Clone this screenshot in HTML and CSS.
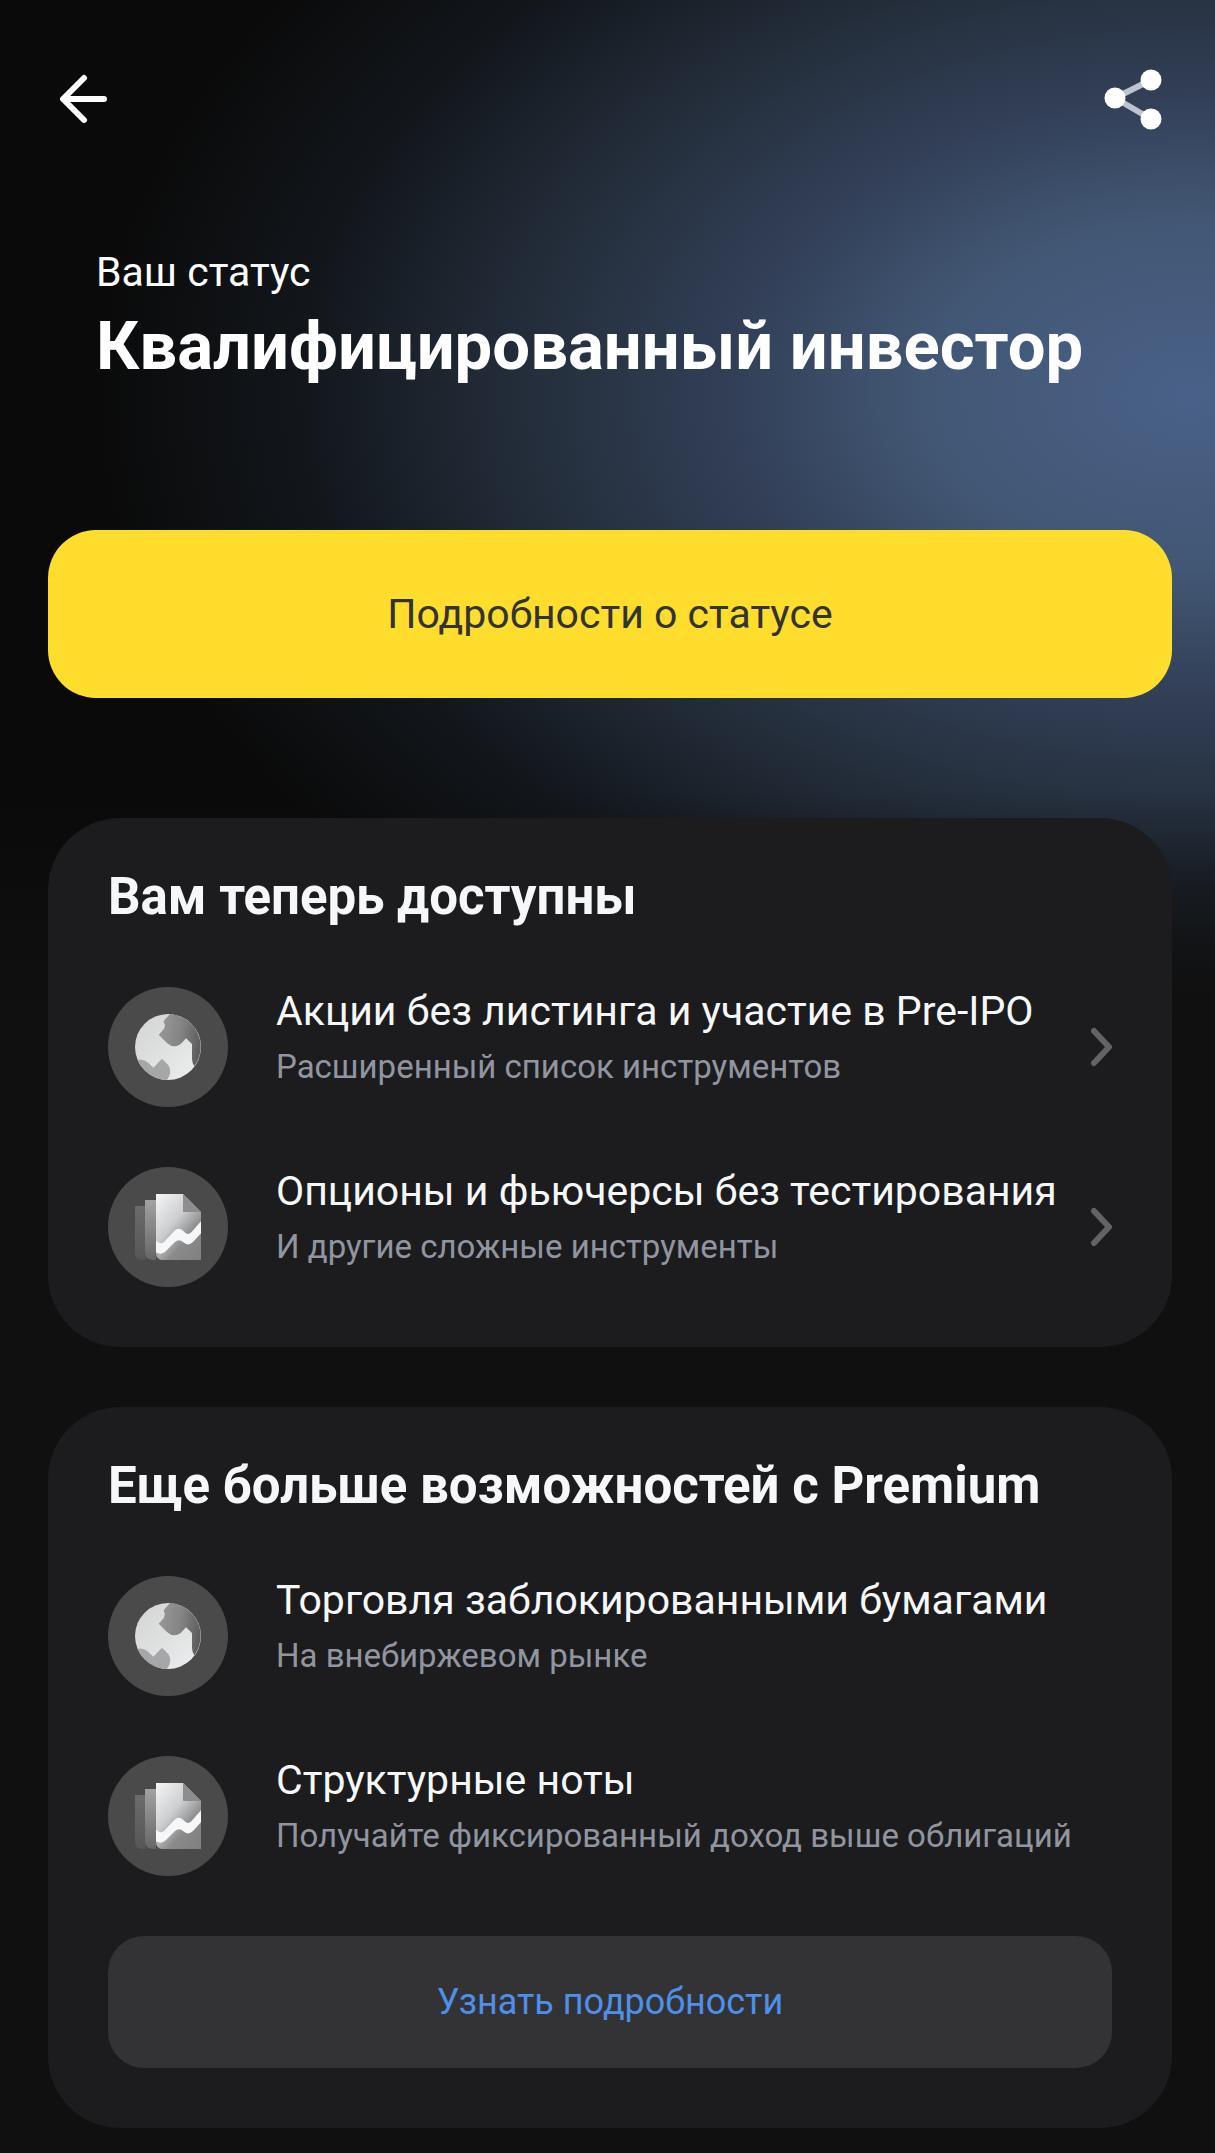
FILE: index.html
```html
<!DOCTYPE html>
<html lang="ru">
<head>
  <meta charset="UTF-8">
  <meta name="viewport" content="width=device-width, initial-scale=1">
  <title>Статус инвестора</title>
  <link rel="stylesheet" href="styles.css">
</head>
<body>

<!-- Shared icons -->
<svg class="sprite" aria-hidden="true">
  <defs>
    <linearGradient id="globeLight" x1="0" y1="0" x2="1" y2="1">
      <stop offset="0" stop-color="#d2d4d5"/>
      <stop offset="0.5" stop-color="#dfe1e1"/>
      <stop offset="1" stop-color="#eeeff0"/>
    </linearGradient>
    <linearGradient id="globeDark" x1="0" y1="0.3" x2="1" y2="0.5">
      <stop offset="0" stop-color="#989898"/>
      <stop offset="0.5" stop-color="#858585"/>
      <stop offset="1" stop-color="#5c5c5d"/>
    </linearGradient>
    <linearGradient id="sheetBack" x1="0" y1="0" x2="0" y2="1">
      <stop offset="0" stop-color="#6b6b6c"/>
      <stop offset="1" stop-color="#565657"/>
    </linearGradient>
    <linearGradient id="sheetMid" x1="0" y1="0" x2="0" y2="1">
      <stop offset="0" stop-color="#a2a2a3"/>
      <stop offset="1" stop-color="#666667"/>
    </linearGradient>
    <linearGradient id="sheetFront" x1="0" y1="0" x2="0.8" y2="1">
      <stop offset="0" stop-color="#f6f6f7"/>
      <stop offset="0.45" stop-color="#cdcecf"/>
      <stop offset="0.75" stop-color="#8a8a8b"/>
      <stop offset="1" stop-color="#828283"/>
    </linearGradient>
  </defs>
  <symbol id="globe" viewBox="0 0 360 360">
    <circle cx="180" cy="180" r="99" fill="url(#globeLight)"/>
    <path d="M186 81L169 100Q165 106 170 111Q172 118 167 127L152 143L176 167Q197 187 218 171L234 154L252 171V215Q252 226 259 238A99 99 0 0 0 186 81Z" fill="url(#globeDark)"/>
    <path d="M89 218Q106 215 119 226L136 242L162 215L180 233Q195 252 177 279A99 99 0 0 1 89 218Z" fill="#a6a7a8"/>
  </symbol>
  <symbol id="sheets" viewBox="0 0 360 360">
    <path d="M81 117H112V279H103Q81 279 81 257Z" fill="url(#sheetBack)"/>
    <path d="M111 99H144V279H135Q111 279 111 255Z" fill="url(#sheetMid)"/>
    <path d="M144 81H225L279 135V279H166Q144 279 144 257Z" fill="url(#sheetFront)"/>
    <path d="M225 81L279 135H225Z" fill="#8d8d8e"/>
    <path d="M144 221Q158 234 168 225L199 192Q212 179 226 192L230 196Q240 206 250 196L279 163V199L255 225Q240 239 226 226Q213 213 200 226L174 252Q160 266 144 256Z" fill="#f6f7f8"/>
  </symbol>
  <symbol id="chevron" viewBox="0 0 24 40">
    <path d="M6 4L21 20L6 36" fill="none" stroke="#636364" stroke-width="6" stroke-linecap="round" stroke-linejoin="round"/>
  </symbol>
</svg>

<main class="page">
  <header class="topbar">
    <button class="icon-btn" aria-label="Назад">
      <svg width="60" height="60" viewBox="0 0 60 60">
        <path d="M36 9L15 30L36 51M16 30H56" fill="none" stroke="#fff" stroke-width="6" stroke-linecap="round" stroke-linejoin="round"/>
      </svg>
    </button>
    <button class="icon-btn" aria-label="Поделиться">
      <svg width="60" height="60" viewBox="0 0 60 60">
        <path d="M47 11L11 29L47 50" fill="none" stroke="#bcc4cf" stroke-width="6"/>
        <circle cx="11" cy="29" r="10.5" fill="#fff"/>
        <circle cx="47" cy="11" r="10.5" fill="#fff"/>
        <circle cx="47" cy="50" r="10.5" fill="#fff"/>
      </svg>
    </button>
  </header>

  <section class="status">
    <p class="status-label">Ваш статус</p>
    <h1>Квалифицированный инвестор</h1>
  </section>

  <button class="btn-primary">Подробности о статусе</button>

  <section class="card">
    <h2>Вам теперь доступны</h2>
    <ul class="list">
      <li>
        <a class="item" href="#">
          <svg class="item-icon"><use href="#globe"/></svg>
          <span class="item-text">
            <span class="item-title">Акции без листинга и участие в Pre-IPO</span>
            <span class="item-sub">Расширенный список инструментов</span>
          </span>
          <svg class="item-arrow"><use href="#chevron"/></svg>
        </a>
      </li>
      <li>
        <a class="item" href="#">
          <svg class="item-icon"><use href="#sheets"/></svg>
          <span class="item-text">
            <span class="item-title">Опционы и фьючерсы без тестирования</span>
            <span class="item-sub">И другие сложные инструменты</span>
          </span>
          <svg class="item-arrow"><use href="#chevron"/></svg>
        </a>
      </li>
    </ul>
  </section>

  <section class="card">
    <h2>Еще больше возможностей с Premium</h2>
    <ul class="list">
      <li class="item">
        <svg class="item-icon"><use href="#globe"/></svg>
        <span class="item-text">
          <span class="item-title">Торговля заблокированными бумагами</span>
          <span class="item-sub">На внебиржевом рынке</span>
        </span>
      </li>
      <li class="item">
        <svg class="item-icon"><use href="#sheets"/></svg>
        <span class="item-text">
          <span class="item-title">Структурные ноты</span>
          <span class="item-sub">Получайте фиксированный доход выше облигаций</span>
        </span>
      </li>
    </ul>
    <button class="btn-secondary">Узнать подробности</button>
  </section>
</main>

</body>
</html>
```
FILE: styles.css
```css
* {
  box-sizing: border-box;
}

body {
  margin: 0;
  background-color: #101010;
  color: #f6f7f8;
  font-family: Roboto, "Noto Sans", sans-serif;
}

h1, h2, p, ul {
  margin: 0;
  padding: 0;
}

button {
  border: none;
  font-family: inherit;
  cursor: pointer;
}

.sprite {
  position: absolute;
  width: 0;
  height: 0;
}

.page {
  padding: 69px 43px 25px 48px;
  background:
    linear-gradient(to bottom, rgba(16, 16, 16, 0) 790px, #101010 1020px),
    radial-gradient(1120px 730px at 98% 395px, #496188 0%, #425774 24%, #323f57 41%, #232d3a 60%, #12161b 80%, #0a0a0a 98%);
}

.topbar {
  display: flex;
  justify-content: space-between;
  padding-right: 8px;
}

.icon-btn {
  display: flex;
  padding: 0;
  background: none;
}

.icon-btn svg {
  overflow: visible;
}

.status {
  padding: 115px 48px 0;
  color: #fff;
}

.status-label {
  font-size: 41px;
  line-height: 56px;
}

h1 {
  font-size: 67px;
  font-weight: 700;
  line-height: 92px;
}

.btn-primary {
  display: block;
  width: 100%;
  height: 168px;
  margin: 138px 0 120px;
  border-radius: 48px;
  background-color: #ffdd2d;
  color: #333;
  font-size: 41px;
}

.card {
  padding: 48px 60px 60px;
  border-radius: 72px;
  background-color: #1c1c1e;
}

.card + .card {
  margin-top: 60px;
}

h2 {
  margin-bottom: 60px;
  font-size: 51px;
  font-weight: 700;
  line-height: 61px;
}

.list {
  display: grid;
  gap: 60px;
  list-style: none;
}

.item {
  display: flex;
  align-items: center;
  gap: 48px;
  color: inherit;
  text-decoration: none;
}

.item-icon {
  flex: none;
  width: 120px;
  height: 120px;
  border-radius: 50%;
  background-color: #4a4a4b;
}

.item-text {
  display: flex;
  flex: 1;
  flex-direction: column;
  align-self: flex-start;
  gap: 8px;
  min-width: 0;
  white-space: nowrap;
}

.item-title {
  font-size: 41px;
  line-height: 48px;
}

.item-sub {
  color: #9195a0;
  font-size: 33px;
  line-height: 48px;
}

.item-arrow {
  flex: none;
  width: 24px;
  height: 40px;
  margin-left: -48px;
}

.btn-secondary {
  display: block;
  width: 100%;
  height: 132px;
  margin-top: 60px;
  border-radius: 36px;
  background-color: #333335;
  color: #4f8fe8;
  font-size: 36px;
}
```
